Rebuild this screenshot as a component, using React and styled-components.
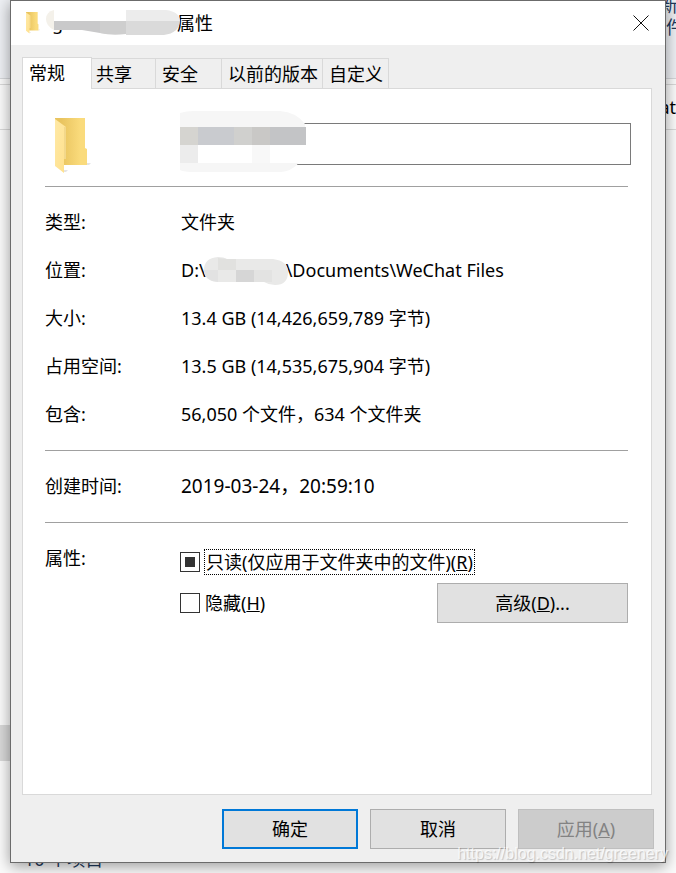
import React, { useState } from 'react';
import styled, { createGlobalStyle } from 'styled-components'

const GlobalStyle = createGlobalStyle`
  * {
    box-sizing: border-box;
  }

  body {
    margin: 0;
    color: #000;
    font: 18px/24px "Noto Sans", "Noto Sans CJK SC", sans-serif;
  }

  button, input {
    font: inherit;
    color: inherit;
  }
`;

function FolderIcon(props) {
  return (
    <svg viewBox="0 0 36 56" {...props}>
      <defs>
        <linearGradient id="folderBack" x1="0" x2="1">
          <stop offset="0.2" stopColor="#e9c45f" />
          <stop offset="0.8" stopColor="#fadb7c" />
        </linearGradient>
        <linearGradient id="folderFront" x1="0" x2="1" y2="1">
          <stop offset="0" stopColor="#ffe9a6" />
          <stop offset="1" stopColor="#ffe08b" />
        </linearGradient>
      </defs>
      <path d="M9 52h4l-2 2H9zM32 45h4l-2 2h-2z" fill="#e4e4e4" />
      <path d="M0 0h30v30l2 1v16H9L0 40z" fill="url(#folderBack)" />
      <path d="M0 1l11 8v32H9v14L0 48z" fill="url(#folderFront)" />
      <path d="M9 9h2v32H9z" fill="#f3d88b" />
    </svg>
  )
}

function TitleSmudge() {
  return (
    <Smudge width="134" height="26" viewBox="0 0 134 26">
      <path d="M8 0Q0 2 0 9q0 7 8 11V0z" fill="#f4f1ea" />
      <path d="M8 11h72v12q-14 2-26 0l-18-3H8z" fill="#c9c9ca" />
      <path d="M8 0h72v11H8z" fill="#fff" />
      <path d="M80 0h40q14 2 14 11H80z" fill="#ececec" />
      <path d="M80 11h54q-1 12-16 14H80z" fill="#dadada" />
      <path d="M54 11h26v13q-14 2-26-1z" fill="#cecece" />
    </Smudge>
  )
}

function PathSmudge() {
  return (
    <Smudge width="84" height="29" viewBox="0 0 84 29">
      <path d="M14 0q6 0 9 2h46q15 2 15 13 0 13-13 13-6 0-11-3H14Q0 24 0 13 0 1 14 0z" fill="#e9e9e8" />
      <path d="M14 1l9 1h9v11H14z" fill="#e1e1df" />
      <path d="M0 13h14v12Q1 24 0 13z" fill="#e2e2e2" />
      <path d="M32 13h18v12H32z" fill="#d6d6d6" />
      <path d="M50 13h18v12H50z" fill="#e3e3e2" />
    </Smudge>
  )
}

function NameSmudge() {
  return (
    <Smudge width="126" height="61" viewBox="0 0 126 61">
      <path d="M0 2q6-2 14-2h86q16 1 25 13l1 22q-5 24-25 26H14Q4 61 0 59z" fill="#f6f6f6" />
      <path d="M0 34h126v18H0z" fill="#fff" />
      <path d="M0 34h18v18H0z" fill="#ececec" />
      <path d="M72 34h18v18H72z" fill="#f8f8f8" />
      <path d="M0 16h18v18H0z" fill="#d5d4d0" />
      <path d="M18 16h36v18H18z" fill="#c9cbcf" />
      <path d="M54 16h18v18H54z" fill="#d0d0ce" />
      <path d="M72 16h18v18H72z" fill="#c9c8c6" />
      <path d="M90 16h36v18H90z" fill="#c3c4c6" />
    </Smudge>
  )
}

const tabs = ['常规', '共享', '安全', '以前的版本', '自定义']

function App() {
  const [activeTab, setActiveTab] = useState('常规')
  const [hidden, setHidden] = useState(false)

  function setMixed(el) {
    if (el) el.indeterminate = true
  }

  return (
    <Desktop>
      <GlobalStyle />
      {/* Explorer window behind the dialog */}
      <Explorer aria-hidden="true">
        <Ribbon>
          <RibbonText>新</RibbonText>
          <RibbonText $clipped>件</RibbonText>
        </Ribbon>
        <Address>at</Address>
        <Tree>
          <TreeSelection />
        </Tree>
        <StatusBar>10 个项目</StatusBar>
      </Explorer>

      <Dialog role="dialog" aria-label="属性">
        <TitleBar>
          <SmallFolder />
          <Title>
            <Redacted $width={125} $left={-6}>g<TitleSmudge /></Redacted>
            属性
          </Title>
          <CloseButton aria-label="关闭">
            <svg width="16" height="16" viewBox="0 0 16 16" stroke="#111" fill="none">
              <path d="M.5.5l15 15M15.5.5l-15 15" />
            </svg>
          </CloseButton>
        </TitleBar>

        <TabList role="tablist">
          {tabs.map(tab => (
            <Tab
              key={tab}
              role="tab"
              aria-selected={tab === activeTab}
              $active={tab === activeTab}
              onClick={() => setActiveTab(tab)}
            >
              {tab}
            </Tab>
          ))}
        </TabList>

        <Panel role="tabpanel">
          <NameRow>
            <IconCell><LargeFolder /></IconCell>
            <NameField>
              <NameInput type="text" aria-label="名称" />
              <NameSmudge />
            </NameField>
          </NameRow>
          <Divider />
          <Details>
            <Label>类型:</Label>
            <Value>文件夹</Value>
            <Label>位置:</Label>
            <Value>
              D:\<Redacted $width={80} $left={-2}><PathSmudge /></Redacted>\Documents\WeChat Files
            </Value>
            <Label>大小:</Label>
            <Value>13.4 GB (14,426,659,789 字节)</Value>
            <Label>占用空间:</Label>
            <Value>13.5 GB (14,535,675,904 字节)</Value>
            <Label>包含:</Label>
            <Value>56,050 个文件，634 个文件夹</Value>
          </Details>
          <Divider />
          <Details>
            <Label>创建时间:</Label>
            <Value $date>2019-03-24，20:59:10</Value>
          </Details>
          <Divider />
          <Attributes>
            <AttributesLabel>属性:</AttributesLabel>
            <Options>
              <Option>
                <CheckBox type="checkbox" ref={setMixed} />
                <OptionText $focused>只读(仅应用于文件夹中的文件)(<u>R</u>)</OptionText>
              </Option>
              <OptionRow>
                <Option>
                  <CheckBox type="checkbox" checked={hidden} onChange={() => setHidden(!hidden)} />
                  <OptionText>隐藏(<u>H</u>)</OptionText>
                </Option>
                <Button $wide>高级(<u>D</u>)...</Button>
              </OptionRow>
            </Options>
          </Attributes>
        </Panel>

        <Footer>
          <Button $primary>确定</Button>
          <Button>取消</Button>
          <Button disabled>应用(<u>A</u>)</Button>
        </Footer>
      </Dialog>

      <Watermark>https://blog.csdn.net/greenery</Watermark>
    </Desktop>
  )
}

const Desktop = styled.div`
    display: grid;
    grid-template: minmax(100vh, auto) / minmax(0, 1fr);
    overflow: hidden;

    & > * {
        grid-area: 1 / 1;
    }
`;

const Explorer = styled.div`
    display: flex;
    flex-direction: column;
    background: #fbfbfb;
    overflow: hidden;
`;

const Ribbon = styled.div`
    height: 85px;
    display: flex;
    flex-direction: column;
    align-items: flex-end;
    margin-top: -6px;
    background: #eef0f4;
    border-bottom: 1px solid #d5d7da;
    color: #1e395b;
    line-height: 22px;
`;

const RibbonText = styled.span`
    margin-right: ${props => props.$clipped ? -8 : -2}px;
`;

const Address = styled.div`
    height: 46px;
    margin-top: 5px;
    border: solid #d9d9d9;
    border-width: 1px 0;
    line-height: 44px;
    text-align: right;
`;

const Tree = styled.div`
    flex: 1;
    display: flex;
    flex-direction: column;
    justify-content: flex-end;
    padding-bottom: 86px;
`;

const TreeSelection = styled.div`
    width: 40px;
    height: 36px;
    background: #d9d9d9;
`;

const StatusBar = styled.div`
    height: 26px;
    padding-left: 24px;
    color: #1e395b;
`;

const Dialog = styled.div`
    z-index: 1;
    display: flex;
    flex-direction: column;
    margin: 0 10px 10px;
    background: #efefef;
    border: 1px solid #6b6b6b;
    box-shadow: 0 3px 14px rgba(0, 0, 0, 0.4);
`;

const TitleBar = styled.div`
    height: 44px;
    display: flex;
    align-items: center;
    padding: 0 16px 0 15px;
    background: #fff;
`;

const SmallFolder = styled(FolderIcon)`
    width: 14px;
    height: 22px;
    margin-right: 12px;
`;

const Title = styled.div`
    flex: 1;
    display: flex;
`;

const CloseButton = styled.button`
    display: flex;
    padding: 0;
    border: none;
    background: none;
`;

const Redacted = styled.span`
    position: relative;
    display: inline-block;
    vertical-align: top;
    width: ${props => props.$width}px;
    height: 24px;

    & > svg {
        left: ${props => props.$left}px;
    }
`;

const Smudge = styled.svg`
    position: absolute;
    top: -1px;
    left: 0;
`;

const TabList = styled.div`
    display: flex;
    align-items: flex-end;
    margin: 12px 11px 0;
`;

const Tab = styled.button`
    min-width: ${props => props.$active ? 70 : 67}px;
    height: ${props => props.$active ? 32 : 30}px;
    margin-right: ${props => props.$active ? -3 : -1}px;
    margin-bottom: ${props => props.$active ? -1 : 0}px;
    padding: ${props => props.$active ? '0 4px 2px 6px' : '0 4px 0 6px'};
    z-index: ${props => props.$active ? 1 : 0};
    text-align: left;
    background: ${props => props.$active ? '#fff' : '#efefef'};
    border: 1px solid #d9d9d9;
    border-bottom: none;
`;

const Panel = styled.div`
    flex: 1;
    margin: 0 13px 0 11px;
    padding: 0 23px 22px 22px;
    background: #fff;
    border: 1px solid #d9d9d9;
`;

const NameRow = styled.div`
    display: grid;
    grid-template-columns: 135px 1fr;
    align-items: center;
    padding: 23px 0 10px;
    margin-right: -3px;
`;

const IconCell = styled.div`
    display: flex;
    padding: 4px 0 0 10px;
`;

const LargeFolder = styled(FolderIcon)`
    width: 36px;
    height: 56px;
`;

const NameField = styled.div`
    position: relative;
    display: flex;
    align-items: center;
    height: 64px;
`;

const NameInput = styled.input`
    width: 100%;
    height: 42px;
    padding: 0 8px;
    border: 1px solid #7a7a7a;
    border-radius: 0;
    outline: none;
`;

const Divider = styled.hr`
    height: 1px;
    margin: 0 0 11px;
    border: none;
    background: #a0a0a0;
`;

const Details = styled.dl`
    display: grid;
    grid-template-columns: 136px 1fr;
    grid-auto-rows: 48px;
    align-items: center;
    margin: 0 0 12px;
`;

const Label = styled.dt`
    margin: 0;
`;

const Value = styled.dd`
    margin: 0;
    font-size: ${props => props.$date ? 19 : 18}px;
    white-space: nowrap;
`;

const Attributes = styled.div`
    display: grid;
    grid-template-columns: 135px 1fr;
`;

const AttributesLabel = styled.div`
    line-height: 48px;
`;

const Options = styled.div`
    display: flex;
    flex-direction: column;
    gap: 8px;
    padding-top: 15px;
`;

const OptionRow = styled.div`
    display: flex;
    align-items: center;
    justify-content: space-between;
`;

const Option = styled.label`
    display: flex;
    align-items: center;
    width: fit-content;
    height: 26px;
    gap: 4px;
`;

const CheckBox = styled.input`
    appearance: none;
    width: 20px;
    height: 20px;
    margin: 0;
    background: #fff;
    border: 1px solid #333;

    &:indeterminate, &:checked {
        padding: 4px;
        background: #333 content-box;
    }
`;

const OptionText = styled.span`
    padding: 0 1px;
    white-space: nowrap;
    border: ${props => props.$focused ? '1px dotted #000' : 'none'};
`;

const Button = styled.button`
    width: ${props => props.$wide ? 191 : 136}px;
    height: 40px;
    padding: 0;
    background: #e1e1e1;
    border: ${props => props.$primary ? '2px solid #0078d7' : '1px solid #adadad'};

    &:disabled {
        color: #838383;
        background: #ccc;
        border-color: #bfbfbf;
    }
`;

const Footer = styled.div`
    display: flex;
    justify-content: flex-end;
    gap: 12px;
    padding: 14px 11px 13px;
`;

const Watermark = styled.div`
    z-index: 2;
    place-self: end;
    margin: 0 8px 7px;
    font: 16px/24px "Liberation Sans", sans-serif;
    color: rgba(255, 255, 255, 0.75);
    text-shadow: 1px 1px 1px rgba(0, 0, 0, 0.2);
    pointer-events: none;
`;

export default App;
